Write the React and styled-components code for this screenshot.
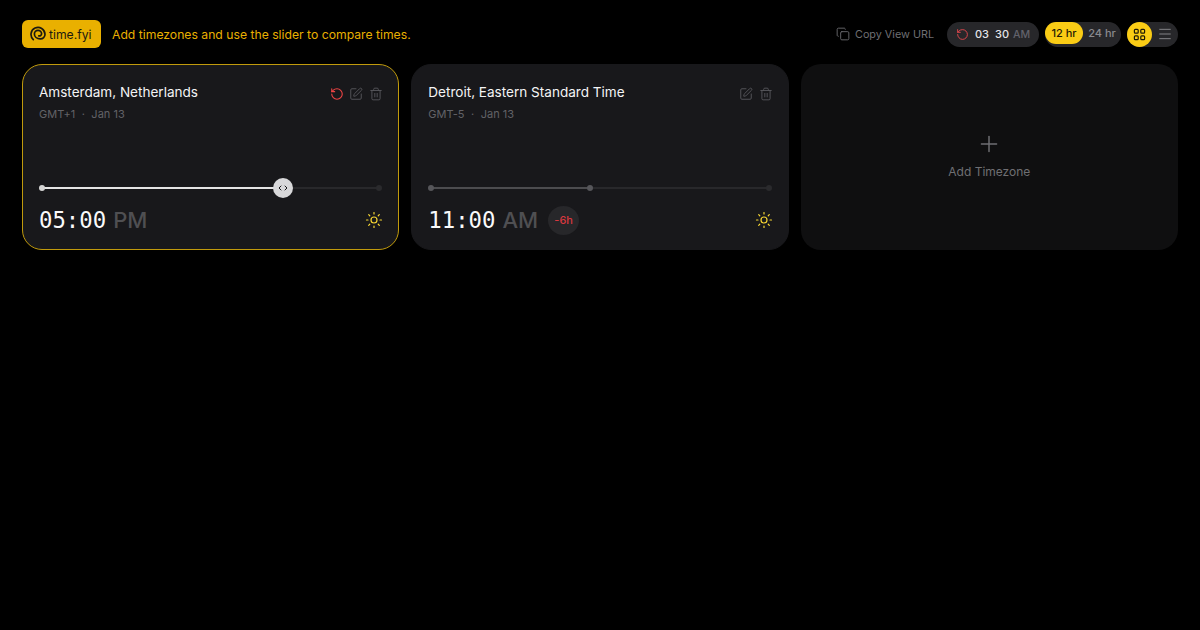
import React from "react";
import styled, { createGlobalStyle } from "styled-components";
import { RotateCcw, Copy, SquarePen, Trash2, Sun, Plus, Menu, ChevronLeft, ChevronRight } from "lucide-react";

const Global = createGlobalStyle`
  html, body { margin: 0; background: #000; }
  body { font-family: Inter, "Liberation Sans", sans-serif; -webkit-font-smoothing: antialiased; }
`;

const Page = styled.div`
  width: 1200px;
  height: 630px;
  box-sizing: border-box;
  padding: 20px 22px;
  background: #000;
  overflow: hidden;
`;
const Header = styled.header`
  display: flex;
  align-items: center;
  justify-content: space-between;
  height: 28px;
  margin-bottom: 16px;
`;
const Left = styled.div`
  display: flex;
  align-items: center;
  gap: 11px;
`;
const Logo = styled.div`
  display: flex;
  align-items: center;
  gap: 3px;
  width: 79px;
  height: 28px;
  box-sizing: border-box;
  padding-left: 8px;
  border-radius: 6px;
  background: #e9b000;
  color: #1c1a10;
  font-size: 12.2px;
`;
const Tagline = styled.span`
  color: #e9b000;
  font-size: 12.2px;
`;
const Right = styled.div`
  display: flex;
  align-items: center;
`;
const CopyLink = styled.div`
  display: flex;
  align-items: center;
  gap: 5px;
  color: #6f6f73;
  font-size: 10.8px;
  margin-right: 13px;
`;
const Pill = styled.div`
  display: flex;
  align-items: center;
  height: 25px;
  border-radius: 13px;
  background: #27272a;
`;
const ClockPill = styled(Pill)`
  width: 92px;
  box-sizing: border-box;
  padding-left: 9px;
  margin-right: 6px;
  font-size: 11px;
  font-weight: 500;
  color: #e4e4e7;
`;
const ClockNum = styled.span`
  margin-left: 6px;
`;
const ClockSuffix = styled.span`
  margin-left: 4px;
  font-size: 10.6px;
  color: #62626a;
`;
const HourPill = styled(Pill)`
  width: 76px;
  margin-right: 6px;
  font-size: 11px;
  font-weight: 500;
`;
const HourOption = styled.div`
  display: flex;
  align-items: center;
  justify-content: center;
  width: 38px;
  height: 22px;
  margin-top: -3px;
  border-radius: 11px;
  background: ${p => (p.$active ? "#facc15" : "transparent")};
  color: ${p => (p.$active ? "#1f1a05" : "#8a8a8e")};
`;
const ViewPill = styled(Pill)`
  width: 51px;
`;
const ViewOption = styled.div`
  display: flex;
  align-items: center;
  justify-content: center;
  width: 25px;
  height: 25px;
  border-radius: 50%;
  background: ${p => (p.$active ? "#facc15" : "transparent")};
  color: ${p => (p.$active ? "#1f1a05" : "#8a8a8e")};
`;
const Grid = styled.main`
  display: grid;
  grid-template-columns: repeat(3, 1fr);
  gap: 12px;
`;
const Card = styled.section`
  position: relative;
  height: 186px;
  box-sizing: border-box;
  padding: 18px 16px 0;
  border-radius: 20px;
  background: #18181b;
  border: 1px solid ${p => (p.$active ? "#c09a0c" : "#18181b")};
  display: flex;
  flex-direction: column;
`;
const TopRow = styled.div`
  display: flex;
  justify-content: space-between;
  height: 49px;
`;
const Title = styled.div`
  color: #f4f4f5;
  font-size: 13.55px;
  font-weight: 400;
  line-height: 18px;
`;
const Sub = styled.div`
  display: flex;
  gap: 6.5px;
  margin-top: 5px;
  color: #626267;
  font-size: 11px;
  line-height: 16px;
`;
const Tools = styled.div`
  display: flex;
  gap: 6px;
  margin: 4px -1px 0 0;
  color: #56565b;
`;
const ResetTool = styled(RotateCcw)`
  margin-right: -1px;
  color: #ef4444;
`;
const Track = styled.div`
  position: relative;
  height: 2px;
  margin: 55px 3px 0;
  background: #28282b;
`;
const Filled = styled.div`
  position: absolute;
  left: 0;
  top: 0;
  height: 2px;
  background: ${p => p.$color};
`;
const Dot = styled.div`
  position: absolute;
  top: -2px;
  width: 6px;
  height: 6px;
  margin-left: -3px;
  border-radius: 50%;
  background: ${p => p.$color};
`;
const Thumb = styled.div`
  position: absolute;
  top: -9px;
  width: 20px;
  height: 20px;
  margin-left: -10px;
  border-radius: 50%;
  background: #d8d8da;
  color: #18181b;
  display: flex;
  align-items: center;
  justify-content: center;
  svg { margin: 0 -1px; }
`;
const BottomRow = styled.div`
  display: flex;
  align-items: center;
  height: 30px;
  margin-top: 16px;
`;
const Time = styled.span`
  color: #fafafa;
  font-family: "DejaVu Sans Mono", monospace;
  font-size: 22.3px;
`;
const Meridiem = styled.span`
  margin-left: 7px;
  color: #4f4f52;
  font-size: 22px;
  font-weight: 500;
`;
const Diff = styled.span`
  display: flex;
  align-items: center;
  justify-content: center;
  width: 31px;
  height: 29px;
  margin-left: 10px;
  border-radius: 50%;
  background: #27272a;
  color: #d8383f;
  font-size: 11px;
  font-weight: 500;
`;
const SunWrap = styled.span`
  display: flex;
  margin: -1px -1px 0 auto;
  color: #f5d532;
`;
const AddCard = styled.section`
  height: 186px;
  border-radius: 20px;
  background: #0f0f10;
  color: #6f6f73;
  display: flex;
  flex-direction: column;
  align-items: center;
  padding-top: 67px;
  box-sizing: border-box;
  font-size: 12px;
`;
const AddLabel = styled.div`
  margin-top: 7px;
  line-height: 16px;
`;

const Spiral = () => (
  <svg width="16" height="16" viewBox="0 0 16 16" fill="none" stroke="#1c1a10" strokeWidth="1.7" strokeLinecap="round">
    <path d="M3.3 13.6A7 7 0 1 1 15 8.2C15 11 13 13 10.2 12.9C6.8 12.8 4.4 10.6 4.4 8C4.4 6 6 4.4 8 4.4C10 4.4 11.6 6 11.6 7.8C11.6 9.3 10.2 10.1 8.8 9.8" />
  </svg>
);
const GridIcon = () => (
  <svg width="13" height="13" viewBox="0 0 13 13" fill="none" stroke="currentColor" strokeWidth="1.2">
    <rect x="1.4" y="1.4" width="3.8" height="3.8" rx="0.9" />
    <rect x="7.8" y="1.4" width="3.8" height="3.8" rx="0.9" />
    <rect x="1.4" y="7.8" width="3.8" height="3.8" rx="0.9" />
    <rect x="7.8" y="7.8" width="3.8" height="3.8" rx="0.9" />
  </svg>
);
const Bin = () => <Trash2 size={14} strokeWidth={1.6} />;

export default function App() {
  return (
    <Page>
      <Global />
      <Header>
        <Left>
          <Logo><Spiral />time.fyi</Logo>
          <Tagline>Add timezones and use the slider to compare times.</Tagline>
        </Left>
        <Right>
          <CopyLink><Copy size={14} strokeWidth={1.5} />Copy View URL</CopyLink>
          <ClockPill>
            <RotateCcw size={13} color="#e5484d" strokeWidth={1.7} />
            <ClockNum>03</ClockNum>
            <ClockNum>30</ClockNum>
            <ClockSuffix>AM</ClockSuffix>
          </ClockPill>
          <HourPill>
            <HourOption $active>12 hr</HourOption>
            <HourOption>24 hr</HourOption>
          </HourPill>
          <ViewPill>
            <ViewOption $active><GridIcon /></ViewOption>
            <ViewOption><Menu size={16} strokeWidth={1.4} /></ViewOption>
          </ViewPill>
        </Right>
      </Header>
      <Grid>
        <Card $active>
          <TopRow>
            <div>
              <Title>Amsterdam, Netherlands</Title>
              <Sub><span>GMT+1</span><span>·</span><span>Jan 13</span></Sub>
            </div>
            <Tools>
              <ResetTool size={14} strokeWidth={1.9} />
              <SquarePen size={14} strokeWidth={1.6} />
              <Bin />
            </Tools>
          </TopRow>
          <Track>
            <Filled $color="#e4e4e4" style={{ width: "71.4%" }} />
            <Dot $color="#d4d4d4" style={{ left: "0%" }} />
            <Dot $color="#2a2a2d" style={{ left: "100%" }} />
            <Thumb style={{ left: "71.4%" }}>
              <ChevronLeft size={8} strokeWidth={3} />
              <ChevronRight size={8} strokeWidth={3} />
            </Thumb>
          </Track>
          <BottomRow>
            <Time>05:00</Time>
            <Meridiem>PM</Meridiem>
            <SunWrap><Sun size={18} strokeWidth={1.6} /></SunWrap>
          </BottomRow>
        </Card>
        <Card>
          <TopRow>
            <div>
              <Title>Detroit, Eastern Standard Time</Title>
              <Sub><span>GMT-5</span><span>·</span><span>Jan 13</span></Sub>
            </div>
            <Tools>
              <SquarePen size={14} strokeWidth={1.6} />
              <Bin />
            </Tools>
          </TopRow>
          <Track>
            <Filled $color="#4c4c4f" style={{ width: "47%" }} />
            <Dot $color="#56565a" style={{ left: "0%" }} />
            <Dot $color="#56565a" style={{ left: "47%" }} />
            <Dot $color="#2a2a2d" style={{ left: "100%" }} />
          </Track>
          <BottomRow>
            <Time>11:00</Time>
            <Meridiem>AM</Meridiem>
            <Diff>-6h</Diff>
            <SunWrap><Sun size={18} strokeWidth={1.6} /></SunWrap>
          </BottomRow>
        </Card>
        <AddCard>
          <Plus size={26} strokeWidth={1.35} />
          <AddLabel>Add Timezone</AddLabel>
        </AddCard>
      </Grid>
    </Page>
  );
}
